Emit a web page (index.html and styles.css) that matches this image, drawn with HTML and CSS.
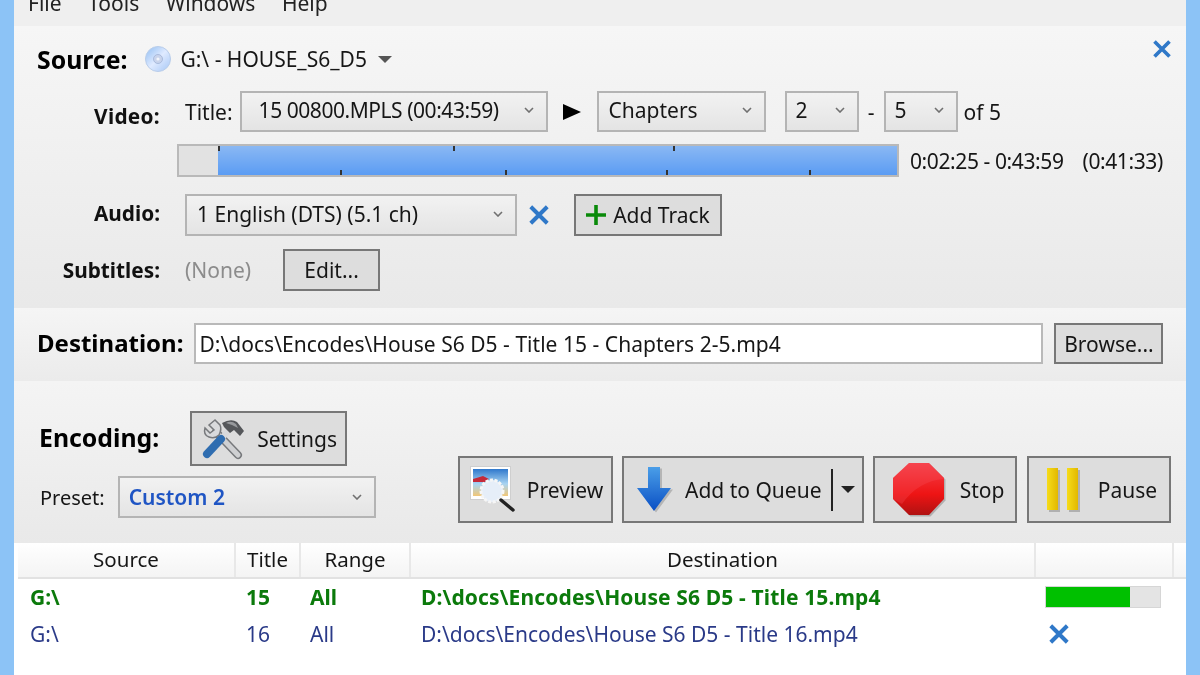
FILE: index.html
```html
<!DOCTYPE html>
<html lang="en">
<head>
    <meta charset="UTF-8">
    <meta name="viewport" content="width=device-width, initial-scale=1.0">
    <title>HandBrake Encoder</title>
    <link rel="stylesheet" href="styles.css">
</head>
<body>
    <svg class="defs" width="0" height="0">
        <defs>
            <g id="cross"><path d="M2 2 L14 14 M14 2 L2 14" fill="none" stroke="#2f78c8" stroke-width="2.900"/></g>
            <g id="chev"><path d="M1 1 L5 5 L9 1" fill="none" stroke="#707070" stroke-width="1.600"/></g>
        </defs>
    </svg>
    <div class="window">
        <nav class="menu">
            <span>File</span>
            <span>Tools</span>
            <span>Windows</span>
            <span>Help</span>
        </nav>

        <section class="source">
            <svg class="close" width="20" height="20" viewBox="0 0 16 16"><use href="#cross"/></svg>
            <div class="source-head">
                <h2>Source:</h2>
                <svg class="disc" width="28" height="28" viewBox="0 0 28 28">
                    <defs>
                        <linearGradient id="discFill" x1="0" y1="0" x2="1" y2="1">
                            <stop offset="0" stop-color="#8fbdf2"/>
                            <stop offset="0.5" stop-color="#dfeaff"/>
                            <stop offset="1" stop-color="#a4c6f5"/>
                        </linearGradient>
                    </defs>
                    <circle cx="14" cy="14" r="12.500" fill="url(#discFill)" stroke="#b9cdea"/>
                    <circle cx="14" cy="14" r="4.500" fill="#c9d4ec" stroke="#a9bbdd"/>
                    <circle cx="14" cy="14" r="1.600" fill="#f2f5fb"/>
                </svg>
                <span class="drive">G:\ - HOUSE_S6_D5</span>
                <span class="caret"></span>
            </div>

            <div class="row row-video">
                <label>Video:</label>
                <span class="plain title-label">Title:</span>
                <div class="select select-title"><span>15 00800.MPLS (00:43:59)</span><svg width="10" height="6"><use href="#chev"/></svg></div>
                <span class="play"></span>
                <div class="select select-range"><span>Chapters</span><svg width="10" height="6"><use href="#chev"/></svg></div>
                <div class="select select-num select-from"><span>2</span><svg width="10" height="6"><use href="#chev"/></svg></div>
                <span class="plain dash">-</span>
                <div class="select select-num"><span>5</span><svg width="10" height="6"><use href="#chev"/></svg></div>
                <span class="plain of">of 5</span>
            </div>

            <div class="timeline-row">
                <div class="timeline">
                    <div class="timeline-fill">
                        <i class="tick top" style="left: 0"></i>
                        <i class="tick bottom" style="left: 122px"></i>
                        <i class="tick top" style="left: 235px"></i>
                        <i class="tick bottom" style="left: 287px"></i>
                        <i class="tick top" style="left: 455px"></i>
                        <i class="tick bottom" style="left: 448px"></i>
                        <i class="tick bottom" style="left: 591px"></i>
                    </div>
                </div>
                <span class="plain times">0:02:25 - 0:43:59</span>
                <span class="plain times duration">(0:41:33)</span>
            </div>

            <div class="row row-audio">
                <label>Audio:</label>
                <div class="select select-audio"><span>1 English (DTS) (5.1 ch)</span><svg width="10" height="6"><use href="#chev"/></svg></div>
                <svg class="audio-x" width="22" height="22" viewBox="0 0 16 16"><use href="#cross"/></svg>
                <button class="btn btn-add">
                    <svg width="20" height="20" viewBox="0 0 20 20"><path d="M10 0 V20 M0 10 H20" stroke="#0a8a0a" stroke-width="3.600"/></svg>
                    Add Track
                </button>
            </div>

            <div class="row row-subs">
                <label>Subtitles:</label>
                <span class="plain none">(None)</span>
                <button class="btn btn-edit">Edit...</button>
            </div>
        </section>

        <section class="destination">
            <h2>Destination:</h2>
            <div class="path">D:\docs\Encodes\House S6 D5 - Title 15 - Chapters 2-5.mp4</div>
            <button class="btn btn-browse">Browse...</button>
        </section>

        <section class="encoding">
            <div class="encoding-left">
                <div class="encoding-head">
                    <h2>Encoding:</h2>
                    <button class="btn btn-settings">
                        <svg width="44" height="44" viewBox="0 0 44 44">
                            <!-- wrench -->
                            <path d="M37 38 L15 15" stroke="#77797c" stroke-width="8" stroke-linecap="round"/>
                            <path d="M37 38 L15 15" stroke="#cfd0d2" stroke-width="5" stroke-linecap="round"/>
                            <path d="M14 3 L8 8 L13 13 L9 16 L4 11 Q2 18 8 20 Q14 22 18 18 Q21 12 19 8 Z" fill="#d9dadc" stroke="#77797c" stroke-width="1.500"/>
                            <!-- hammer -->
                            <path d="M29 12 L20 22" stroke="#d8d9db" stroke-width="6"/>
                            <path d="M6 37 L20 22" stroke="#2f6db0" stroke-width="8" stroke-linecap="round"/>
                            <path d="M21 6 Q30 1 36 5 L43 14 L39 19 L33 13 L29 16 L23 10 Z" fill="#55575a"/>
                            <path d="M25 6 Q30 3 35 7 L37 11 L31 8 Z" fill="#97999c"/>
                        </svg>
                        Settings
                    </button>
                </div>
                <div class="preset-row">
                    <span class="plain preset-label">Preset:</span>
                    <div class="select select-preset"><span>Custom 2</span><svg width="10" height="6"><use href="#chev"/></svg></div>
                </div>
            </div>
            <div class="actions">
                <button class="btn btn-action btn-preview">
                    <svg width="50" height="50" viewBox="0 0 50 50">
                        <defs>
                            <linearGradient id="sky" x1="0" y1="0" x2="0" y2="1">
                                <stop offset="0" stop-color="#2f78cc"/>
                                <stop offset="0.55" stop-color="#a8d4f2"/>
                                <stop offset="1" stop-color="#f2c777"/>
                            </linearGradient>
                        </defs>
                        <rect x="2.500" y="1.500" width="40" height="33" fill="#fff" stroke="#cfcfcf"/>
                        <rect x="5" y="4" width="35" height="27" fill="url(#sky)"/>
                        <path d="M5 14 L15 11 L21 14 L17 17 L5 17 Z" fill="#c42a3a"/>
                        <circle cx="24" cy="26" r="11" fill="#e6eef8" stroke="#f6f6f6" stroke-width="3" stroke-dasharray="3 1.500"/>
                        <path d="M33 35 L45 45" stroke="#222" stroke-width="3.500" stroke-linecap="round"/>
                    </svg>
                    Preview
                </button>
                <button class="btn btn-action btn-queue">
                    <svg class="arrow" width="38" height="48" viewBox="0 0 38 48">
                        <defs>
                            <linearGradient id="arrowFill" x1="0" y1="0" x2="0" y2="1">
                                <stop offset="0" stop-color="#4a9ee8"/>
                                <stop offset="1" stop-color="#0a4fc4"/>
                            </linearGradient>
                        </defs>
                        <path d="M13 1 H25 V22 H36 L19 45 L2 22 H13 Z" fill="#000" fill-opacity="0.18" transform="translate(2 1.500)"/>
                        <path d="M13 1 H25 V22 H36 L19 45 L2 22 H13 Z" fill="url(#arrowFill)"/>
                    </svg>
                    <span class="queue-label">Add to Queue</span>
                    <span class="queue-split"></span>
                    <span class="caret caret-dark"></span>
                </button>
                <button class="btn btn-action btn-stop">
                    <svg width="58" height="58" viewBox="0 0 58 58">
                        <defs>
                            <linearGradient id="stopFill" x1="0" y1="0" x2="0" y2="1">
                                <stop offset="0" stop-color="#f5404a"/>
                                <stop offset="0.6" stop-color="#ee1414"/>
                                <stop offset="1" stop-color="#b01212"/>
                            </linearGradient>
                        </defs>
                        <path d="M19 2 H39 L54 17 V38 L39 54 H19 L3 38 V17 Z" fill="#000" fill-opacity="0.2" transform="translate(1.500 1.500)"/>
                        <path d="M19 2 H39 L54 17 V38 L39 54 H19 L3 38 V17 Z" fill="url(#stopFill)"/>
                        <path d="M19 2 H39 L54 17 V18 Q28 20 12 43 L3 38 V17 Z" fill="#f8505a" fill-opacity="0.3"/>
                    </svg>
                    Stop
                </button>
                <button class="btn btn-action btn-pause">
                    <svg width="38" height="48" viewBox="0 0 38 48">
                        <defs>
                            <linearGradient id="barFill" x1="0" y1="0" x2="1" y2="0">
                                <stop offset="0" stop-color="#f6dc1a"/>
                                <stop offset="1" stop-color="#e2b800"/>
                            </linearGradient>
                        </defs>
                        <rect x="6" y="4" width="11" height="42" fill="#000" fill-opacity="0.2"/>
                        <rect x="26" y="4" width="11" height="42" fill="#000" fill-opacity="0.2"/>
                        <rect x="4" y="2" width="11" height="42" fill="url(#barFill)"/>
                        <rect x="24" y="2" width="11" height="42" fill="url(#barFill)"/>
                    </svg>
                    Pause
                </button>
            </div>
        </section>

        <section class="queue">
            <div class="queue-grid queue-header">
                <div>Source</div>
                <div>Title</div>
                <div>Range</div>
                <div>Destination</div>
                <div></div>
            </div>
            <div class="queue-grid queue-row active">
                <div>G:\</div>
                <div>15</div>
                <div>All</div>
                <div>D:\docs\Encodes\House S6 D5 - Title 15.mp4</div>
                <div><div class="progress"><div class="progress-fill" style="width: 74%"></div></div></div>
            </div>
            <div class="queue-grid queue-row">
                <div>G:\</div>
                <div>16</div>
                <div>All</div>
                <div>D:\docs\Encodes\House S6 D5 - Title 16.mp4</div>
                <div><svg class="row-x" width="22" height="22" viewBox="0 0 16 16"><use href="#cross"/></svg></div>
            </div>
        </section>
    </div>
</body>
</html>
```

FILE: styles.css
```css
/* Universal Reset */
*
{
    margin: 0;
    padding: 0;
    box-sizing: border-box;
}

body
{
    width: 1200px;
    height: 675px;
    overflow: hidden;
    background-color: #8cc3f6;
    font-family: "Noto Sans", "Open Sans", sans-serif;
    font-size: 21px;
    color: #161616;
}

.defs
{
    display: block;
    height: 0;
}

/* the shot is an upscaled window, so everything is a little soft */
.window
{
    width: 1172px;
    height: 675px;
    margin-left: 14px;
    background-color: #fff;
    overflow: hidden;
    filter: blur(0.4px);
}

h2
{
    font-size: 24.800px;
    font-weight: 700;
    color: #000;
}

label
{
    width: 146px;
    text-align: right;
    font-weight: 700;
    font-size: 20.800px;
    color: #111;
    flex-shrink: 0;
}

.plain
{
    white-space: nowrap;
}

/* Menu */
.menu
{
    height: 26px;
    padding-left: 14px;
    display: flex;
    align-items: flex-end;
    gap: 26.500px;
    background-color: #efefef;
    line-height: 26px;
    overflow: hidden;
}

.menu span
{
    position: relative;
    top: -10px;
    color: #222;
}

/* Source panel */
.source
{
    position: relative;
    height: 282px;
    padding-top: 16px;
    background: linear-gradient(#f6f6f6, #e9e9e9);
}

.close
{
    position: absolute;
    top: 13px;
    right: 14px;
}

.source-head
{
    height: 34px;
    padding-left: 23px;
    display: flex;
    align-items: center;
}

.disc
{
    margin-left: 17px;
}

.drive
{
    margin-left: 8px;
}

.caret
{
    width: 0;
    height: 0;
    margin-left: 11px;
    border-left: 7px solid transparent;
    border-right: 7px solid transparent;
    border-top: 7px solid #555;
}

.row
{
    display: flex;
    align-items: center;
}

.row-video
{
    height: 41px;
    margin-top: 15px;
}

.row-video label
{
    padding-top: 8px;
    letter-spacing: 0.300px;
}

.row-audio label
{
    padding-bottom: 4px;
}

.title-label
{
    margin-left: 25px;
}

.select
{
    height: 41px;
    padding: 0 12px 3px 18px;
    display: flex;
    align-items: center;
    justify-content: space-between;
    border: 2px solid #b4b4b4;
    background: linear-gradient(#f2f2f2, #e4e4e4);
    white-space: nowrap;
}

.select-title
{
    width: 308px;
    margin-left: 7px;
    padding-left: 17px;
    letter-spacing: -0.450px;
}

.play
{
    width: 0;
    height: 0;
    margin: 0 16px 0 15px;
    border-top: 8.500px solid transparent;
    border-bottom: 8.500px solid transparent;
    border-left: 18px solid #000;
}

.select-range
{
    width: 169px;
    padding-left: 10px;
}

.select-num
{
    width: 74px;
    padding-left: 9px;
}

.select-from
{
    margin-left: 19px;
}

.dash
{
    width: 25px;
    text-align: center;
}

.of
{
    margin-left: 6px;
}

/* Timeline */
.timeline-row
{
    height: 33px;
    margin-top: 12px;
    padding-left: 163px;
    display: flex;
    align-items: center;
}

.timeline
{
    width: 722px;
    height: 33px;
    padding-left: 39px;
    border: 2px solid #b9b9b9;
    background-color: #e2e2e2;
}

.timeline-fill
{
    position: relative;
    height: 100%;
    background: linear-gradient(#8ab8f3, #5b9cf3);
}

.tick
{
    position: absolute;
    width: 2px;
    height: 5px;
    background-color: #333;
}

.tick.top
{
    top: 0;
}

.tick.bottom
{
    bottom: 0;
}

.times
{
    margin-left: 11px;
    letter-spacing: -0.400px;
}

.times.duration
{
    margin-left: 19px;
}

.row-audio
{
    height: 42px;
    margin-top: 17px;
}

.select-audio
{
    width: 332px;
    height: 42px;
    margin-left: 25px;
    padding-left: 10px;
}

.audio-x
{
    margin-left: 11px;
}

.row-subs
{
    height: 42px;
    margin-top: 13px;
}

.none
{
    margin-left: 25px;
    color: #8c8c8c;
}

/* Buttons */
.btn
{
    display: flex;
    align-items: center;
    justify-content: center;
    border: 2px solid #777;
    background-color: #dddddd;
    font-family: inherit;
    font-size: 21px;
    color: #161616;
    white-space: nowrap;
}

.btn-add
{
    width: 148px;
    height: 42px;
    margin-left: 24px;
    gap: 7px;
}

.btn-edit
{
    width: 97px;
    height: 42px;
    margin-left: 32px;
}

/* Destination */
.destination
{
    height: 73px;
    padding-left: 23px;
    padding-bottom: 2px;
    display: flex;
    align-items: center;
    background: linear-gradient(#f5f5f5, #ebebeb);
}

.destination h2
{
    font-size: 24px;
    margin-bottom: 2px;
}

.path
{
    width: 849px;
    height: 41px;
    margin-left: 11px;
    padding-left: 3px;
    border: 2px solid #b9b9b9;
    background-color: #fff;
    line-height: 38px;
    letter-spacing: 0.030px;
    white-space: nowrap;
}

.btn-browse
{
    width: 109px;
    height: 41px;
    margin-left: 11px;
}

/* Encoding */
.encoding
{
    height: 162px;
    padding: 30px 15px 20px 25px;
    display: flex;
    justify-content: space-between;
    align-items: flex-end;
    background: linear-gradient(#f4f4f4, #e9e9e9);
}

.encoding-head
{
    display: flex;
    align-items: center;
    gap: 31px;
}

.encoding-head h2
{
    margin-bottom: 4px;
}

.btn-settings
{
    width: 157px;
    height: 55px;
    padding-left: 9px;
    justify-content: flex-start;
    gap: 12px;
}

.preset-row
{
    margin-top: 10px;
    margin-left: 1px;
    display: flex;
    align-items: center;
    gap: 13px;
    margin-bottom: 5px;
}

.preset-label
{
    font-size: 20px;
}

.select-preset
{
    width: 258px;
    height: 42px;
    padding-left: 9px;
    padding-bottom: 0;
    color: #1f55c4;
    font-weight: 600;
}

.actions
{
    display: flex;
    gap: 9px;
}

.btn-action
{
    height: 67px;
    gap: 9px;
}

.btn-preview
{
    width: 155px;
}

.btn-queue
{
    width: 242px;
    padding-left: 11px;
    justify-content: flex-start;
}

.arrow
{
    margin-right: 3px;
}

.queue-split
{
    width: 2px;
    height: 42px;
    background-color: #222;
}

.caret-dark
{
    margin-left: -1px;
    border-top-color: #222;
}

.btn-stop
{
    width: 144px;
    padding-left: 4px;
    gap: 12px;
}

.btn-pause
{
    width: 144px;
    margin-left: 1px;
    padding-left: 2px;
    gap: 17px;
}

/* Queue list */
.queue
{
    padding-left: 4px;
    background-color: #fff;
}

.queue-grid
{
    display: grid;
    grid-template-columns: 218px 65px 110px 625px 138px;
}

.queue-header
{
    height: 36px;
    border-bottom: 2px solid #e2e2e2;
    background: linear-gradient(#fff, #f4f4f4);
    font-size: 20.500px;
    line-height: 32px;
    text-align: center;
}

.queue-header div
{
    border-right: 2px solid #e8e8e8;
}

.queue-row
{
    height: 37px;
    align-items: center;
    color: #2a3a88;
}

.queue-row:nth-child(2)
{
    margin-top: -1px;
}

.queue-row > div
{
    padding-left: 10px;
    white-space: nowrap;
}

.queue-row > div:first-child
{
    padding-left: 12px;
}

.queue-row > div:nth-child(3)
{
    padding-left: 9px;
}

.queue-row.active
{
    font-weight: 700;
    color: #0b7a0b;
}

.queue-row.active > div:nth-child(4)
{
    letter-spacing: 0.140px;
}

.progress
{
    width: 116px;
    height: 22px;
    margin-left: -1px;
    background-color: #e4e4e4;
    border: 1px solid #d6d6d6;
}

.progress-fill
{
    height: 100%;
    background-color: #00c000;
}

.row-x
{
    display: block;
    margin-left: 2px;
}
```
